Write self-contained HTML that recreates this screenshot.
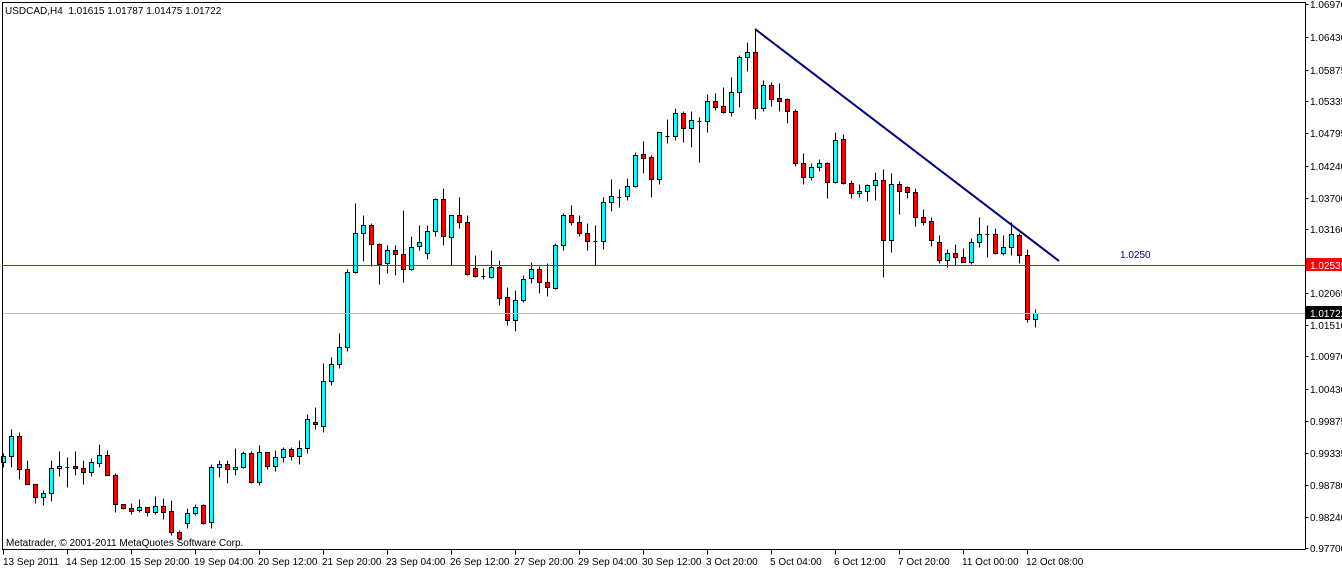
<!DOCTYPE html>
<html><head><meta charset="utf-8"><style>
html,body{margin:0;padding:0;background:#fff;width:1342px;height:568px;overflow:hidden}
svg{display:block}
text{font-family:"Liberation Sans",sans-serif;font-size:10px}
</style></head><body>
<svg id="s" width="1342" height="568" xmlns="http://www.w3.org/2000/svg">
<rect x="0" y="0" width="1342" height="568" fill="#fff"/>
<g id="c" transform="translate(0.5,0.5)" shape-rendering="crispEdges"></g>
<g transform="translate(0.5,0.5)" shape-rendering="crispEdges">
<line x1="2" y1="265" x2="1305" y2="265" stroke="#ff0000"/>
<line x1="2" y1="313" x2="1305" y2="313" stroke="#c0c0c0"/>
<rect x="2" y="2" width="1303" height="547" fill="none" stroke="#000"/>
</g>
<line x1="755" y1="29" x2="1059" y2="261" stroke="#000080" stroke-width="2"/>
<text x="1120" y="258" fill="#000080" font-size="12">1.0250</text>
<text x="5" y="14" fill="#000" xml:space="preserve">USDCAD,H4  1.01615 1.01787 1.01475 1.01722</text>
<text x="6" y="546" fill="#000">Metatrader, © 2001-2011 MetaQuotes Software Corp.</text>
<g id="ax" transform="translate(0.5,0.5)" shape-rendering="crispEdges"></g>
<g fill="#000">
<text x="1310" y="8">1.06970</text>
<text x="1310" y="41">1.06430</text>
<text x="1310" y="74">1.05875</text>
<text x="1310" y="105">1.05335</text>
<text x="1310" y="137">1.04795</text>
<text x="1310" y="170">1.04240</text>
<text x="1310" y="202">1.03700</text>
<text x="1310" y="233">1.03160</text>
<text x="1310" y="265">1.02605</text>
<text x="1310" y="297">1.02065</text>
<text x="1310" y="329">1.01510</text>
<text x="1310" y="360">1.00970</text>
<text x="1310" y="393">1.00430</text>
<text x="1310" y="425">0.99875</text>
<text x="1310" y="457">0.99335</text>
<text x="1310" y="489">0.98780</text>
<text x="1310" y="521">0.98240</text>
<text x="1310" y="552">0.97700</text>
</g>
<rect x="1306" y="258" width="36" height="13" fill="#ff0000"/>
<text x="1310" y="269" fill="#fff">1.02539</text>
<rect x="1306" y="306" width="36" height="13" fill="#000"/>
<text x="1310" y="317" fill="#fff">1.01722</text>
<g fill="#000">
<text x="3" y="565">13 Sep 2011</text>
<text x="66" y="565">14 Sep 12:00</text>
<text x="130" y="565">15 Sep 20:00</text>
<text x="194" y="565">19 Sep 04:00</text>
<text x="258" y="565">20 Sep 12:00</text>
<text x="322" y="565">21 Sep 20:00</text>
<text x="386" y="565">23 Sep 04:00</text>
<text x="450" y="565">26 Sep 12:00</text>
<text x="514" y="565">27 Sep 20:00</text>
<text x="578" y="565">29 Sep 04:00</text>
<text x="642" y="565">30 Sep 12:00</text>
<text x="706" y="565">3 Oct 20:00</text>
<text x="770" y="565">5 Oct 04:00</text>
<text x="834" y="565">6 Oct 12:00</text>
<text x="898" y="565">7 Oct 20:00</text>
<text x="962" y="565">11 Oct 00:00</text>
<text x="1026" y="565">12 Oct 08:00</text>
</g>
</svg>
<script>
var D=[[3,453,456,462,467,1],[11,429,436,456,467,1],[19,432,436,469,479,0],[27,460,469,484,484,0],[35,484,484,497,503,0],[43,490,493,497,505,1],[51,460,468,493,501,1],[59,451,466,468,476,1],[67,457,467,467,487,2],[75,451,466,468,475,0],[83,460,468,472,484,0],[91,458,462,472,476,1],[99,444,455,463,467,1],[107,450,455,475,475,0],[115,473,475,504,512,0],[123,504,504,508,509,0],[131,503,508,511,514,0],[139,499,507,510,512,1],[147,507,507,512,516,0],[155,496,506,512,514,1],[163,498,506,512,519,0],[171,500,511,532,535,0],[179,530,532,538,540,0],[187,508,513,523,528,1],[195,504,507,513,515,1],[203,504,505,523,524,0],[211,464,467,522,528,1],[219,460,464,467,477,1],[227,460,464,469,483,0],[235,448,467,469,475,1],[243,451,453,467,468,1],[251,451,453,482,483,0],[259,445,452,482,485,1],[267,452,452,466,469,0],[275,450,457,466,471,1],[283,447,449,457,462,1],[291,447,449,456,460,0],[299,440,448,456,464,1],[307,414,419,448,453,1],[315,407,422,424,429,0],[323,363,381,426,432,1],[331,357,364,381,385,1],[339,333,347,364,368,1],[347,269,272,347,351,1],[355,203,233,272,273,1],[363,215,225,233,261,1],[371,223,225,244,266,0],[379,243,244,264,284,0],[387,245,250,263,273,1],[395,245,250,254,275,0],[403,210,254,269,282,0],[411,236,247,269,270,1],[419,225,242,246,250,1],[427,225,231,253,259,1],[435,198,199,231,236,1],[443,188,199,236,245,0],[451,215,215,237,265,1],[459,197,215,222,228,0],[467,215,222,274,275,0],[475,255,268,276,277,0],[483,268,276,276,279,2],[491,250,267,277,278,1],[499,260,267,298,305,0],[507,287,297,320,325,0],[515,290,300,320,331,1],[523,275,279,300,302,1],[531,262,269,278,283,1],[539,266,269,282,293,0],[547,263,282,287,296,0],[555,243,245,288,289,1],[563,213,215,245,250,1],[571,205,215,222,225,0],[579,215,222,233,236,0],[587,223,233,241,250,0],[595,225,241,241,265,2],[603,197,202,241,249,1],[611,179,196,202,211,1],[619,189,197,197,207,2],[627,178,186,196,200,1],[635,152,155,186,187,1],[643,141,154,158,173,0],[651,155,157,179,197,0],[659,132,132,179,184,1],[667,119,136,136,143,2],[675,108,113,136,140,1],[683,111,113,128,142,0],[691,111,120,128,147,1],[699,117,121,121,162,2],[707,94,101,121,132,1],[715,93,101,107,110,0],[723,87,106,112,113,0],[731,77,92,112,116,1],[739,55,57,92,107,1],[747,42,52,57,71,1],[755,29,52,108,119,0],[763,80,85,108,111,1],[771,82,85,99,106,0],[779,83,98,101,111,0],[787,98,99,111,123,0],[795,109,111,163,166,0],[803,153,163,177,184,0],[811,163,167,177,180,1],[819,159,163,167,171,1],[827,162,163,182,198,0],[835,132,140,182,183,1],[843,134,139,183,184,0],[851,180,183,193,198,0],[859,184,191,193,197,1],[867,184,185,191,201,1],[875,172,180,185,200,1],[883,169,180,240,277,0],[891,173,184,240,252,1],[899,181,184,191,214,0],[907,186,187,192,198,0],[915,188,192,217,226,0],[923,209,217,222,225,0],[931,217,221,240,246,0],[939,235,242,260,263,0],[947,249,253,260,267,1],[955,244,253,257,265,0],[963,248,257,262,262,0],[971,238,242,262,264,1],[979,217,234,242,247,1],[987,225,234,234,257,2],[995,228,234,253,254,0],[1003,235,247,253,255,1],[1011,222,234,247,255,1],[1019,233,235,255,263,0],[1027,249,255,319,322,0],[1035,309,313,319,327,1]];
var h='';
D.forEach(function(d){var x=d[0];
h+='<line x1="'+x+'" y1="'+d[1]+'" x2="'+x+'" y2="'+d[4]+'" stroke="#000"/>';
if(d[5]==2){h+='<line x1="'+(x-2)+'" y1="'+d[2]+'" x2="'+(x+2)+'" y2="'+d[2]+'" stroke="#000"/>';}
else{h+='<rect x="'+(x-2)+'" y="'+d[2]+'" width="4" height="'+Math.max(1,d[3]-d[2])+'" fill="'+(d[5]?'#00ffff':'#ff0000')+'" stroke="#000"/>';}
});
document.getElementById('c').innerHTML=h;
var a='',ys=[4,37,70,101,133,166,198,229,261,293,325,356,389,421,453,485,517,548];
ys.forEach(function(y){a+='<line x1="1305" y1="'+y+'" x2="1308" y2="'+y+'" stroke="#000"/>';});
for(var i=0;i<17;i++){var x=3+64*i;a+='<line x1="'+x+'" y1="549" x2="'+x+'" y2="554" stroke="#000"/>';}
document.getElementById('ax').innerHTML=a;
</script>
</body></html>
